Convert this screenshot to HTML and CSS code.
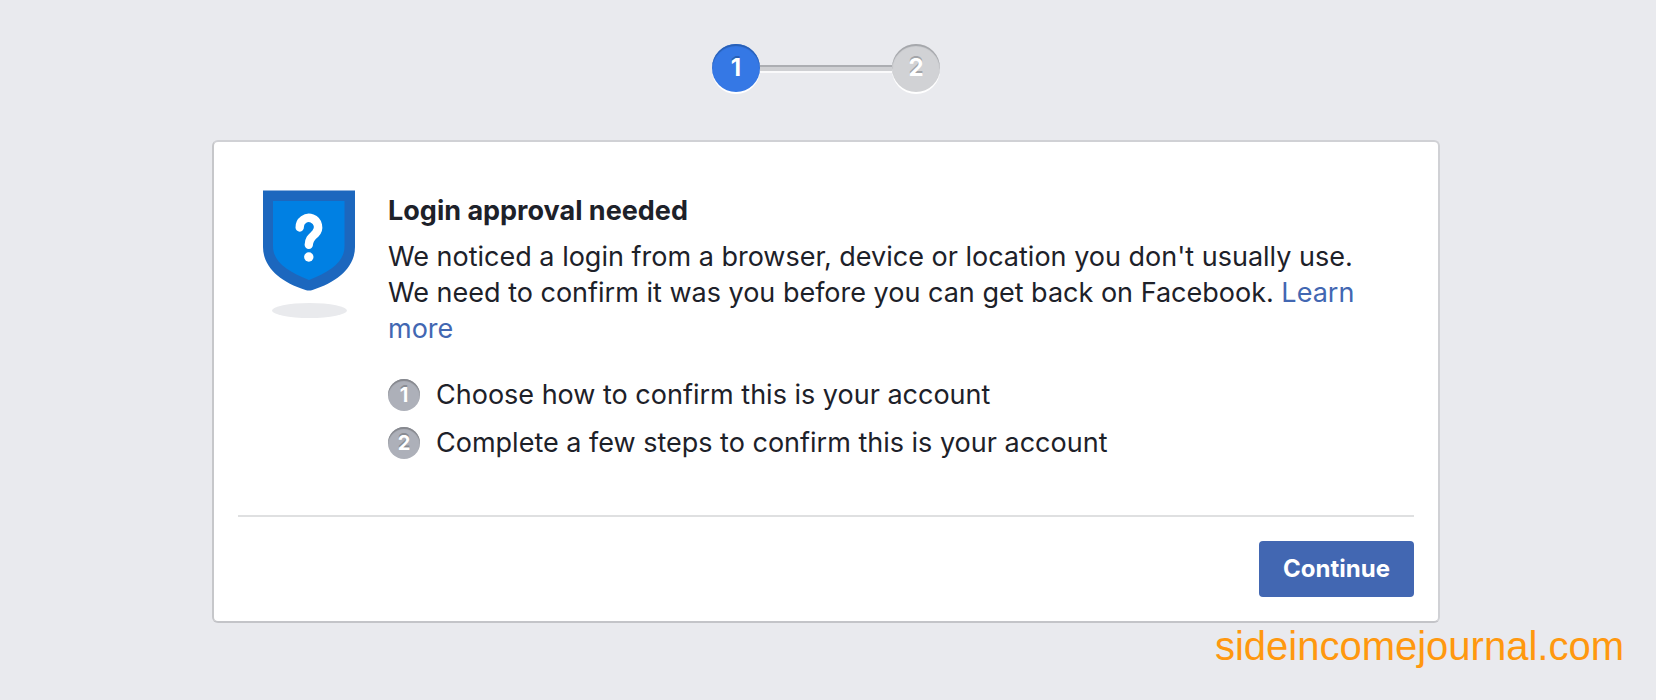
FILE: index.html
```html
<!DOCTYPE html>
<html lang="en">
<head>
<meta charset="utf-8">
<title>Login approval needed</title>
<link rel="stylesheet" href="styles.css">
</head>
<body>
<div class="page">
  <ol class="progress" aria-label="Progress">
    <li class="step step-current" aria-current="step">1</li>
    <li class="track" role="presentation"></li>
    <li class="step">2</li>
  </ol>
  <main class="card">
    <div class="content">
      <svg class="shield" viewBox="0 0 94 130" aria-hidden="true">
        <ellipse cx="47.500" cy="120.500" rx="37.500" ry="7.500" fill="#e9eaed"/>
        <path d="M1 .5H93V57C93 77 76 92 50.5 100Q47 101.200 43.500 100C18 92 1 77 1 57Z" fill="#1c67be"/>
        <path d="M11 11H82.500V56C82.500 72 69 81 47 90C25 81 11 72 11 56Z" fill="#0080e3"/>
        <path d="M37.700 37.500A9.200 9.200 0 1 1 53.500 43.500C50 47 46.800 49 46.800 54.800" fill="none" stroke="#fff" stroke-width="8.400" stroke-linecap="round"/>
        <circle cx="46.800" cy="67" r="4.700" fill="#fff"/>
      </svg>
      <div class="copy">
        <h1 class="title">Login approval needed</h1>
        <p class="message">We noticed a login from a browser, device or location you don't usually use. We need to confirm it was you before you can get back on Facebook. <a class="link" href="#">Learn more</a></p>
        <ol class="tasks">
          <li class="task"><span class="badge">1</span>Choose how to confirm this is your account</li>
          <li class="task"><span class="badge">2</span>Complete a few steps to confirm this is your account</li>
        </ol>
      </div>
    </div>
    <div class="actions">
      <button class="continue" type="button">Continue</button>
    </div>
  </main>
  <footer class="site">sideincomejournal.com</footer>
</div>
</body>
</html>
```
FILE: styles.css
```css
* { box-sizing: border-box; }
body {
  margin: 0;
  background: #e9eaee;
  color: #1d2129;
  font: 27px/36px Inter, "Liberation Sans", sans-serif;
}
ol, h1, p { margin: 0; padding: 0; }
ol { list-style: none; }
.page { padding: 44px 32px 0 28px; }
.progress {
  display: flex;
  align-items: center;
  justify-content: center;
  margin-bottom: 48px;
}
.step {
  width: 48px;
  height: 48px;
  border-radius: 50%;
  background: #d1d2d5;
  box-shadow: inset 0 2px 1px #a4a6aa, 0 2px 0 #fff;
  color: #fff;
  font-size: 24px;
  font-weight: 700;
  line-height: 48px;
  text-align: center;
  text-shadow: 0 -2px 0 #a3a5a9;
}
.step-current {
  background: #3578e5;
  box-shadow: inset 0 2px 1px #285fb5, 0 2px 0 #fff;
  text-shadow: 0 -2px 0 #285fb5;
}
.track {
  width: 132px;
  height: 6px;
  background: #cfd0d3;
  border-top: 2px solid #acaeb2;
  box-shadow: 0 2px 0 #fafafb;
}
.card {
  max-width: 1228px;
  margin: 0 auto;
  padding: 24px;
  background: #fff;
  border: 2px solid;
  border-color: #d0d1d5 #d0d1d5 #c3c4c8 #c6c7ca;
  border-radius: 6px;
}
.content {
  display: flex;
  align-items: flex-start;
  gap: 32px;
  padding: 24px 24px 56px;
}
.shield { flex: none; width: 94px; height: 130px; }
.copy { flex: 1; padding-top: 3px; }
.title { margin-bottom: 10px; font-size: 27px; font-weight: 700; }
.message { margin-bottom: 32px; }
.link { color: #4267b2; text-decoration: none; }
.tasks { display: grid; gap: 16px; }
.task {
  display: flex;
  align-items: center;
  gap: 16px;
  line-height: 32px;
}
.badge {
  flex: none;
  width: 32px;
  height: 32px;
  border-radius: 50%;
  background: #adb0b9;
  box-shadow: inset 0 2px 1px #85878d;
  color: #fff;
  font-size: 20px;
  font-weight: 700;
  text-align: center;
  text-shadow: 0 -2px 0 #898b92;
}
.actions {
  display: flex;
  justify-content: flex-end;
  padding-top: 24px;
  border-top: 2px solid #dfe0e1;
}
.continue {
  height: 56px;
  padding: 0 24px;
  border: 0;
  border-radius: 4px;
  background: #4267b2;
  color: #fff;
  font: 700 24px/56px Inter, "Liberation Sans", sans-serif;
}
.site {
  color: #ff980f;
  font: 40px/46px "Liberation Sans", Arial, sans-serif;
  text-align: right;
}
```
